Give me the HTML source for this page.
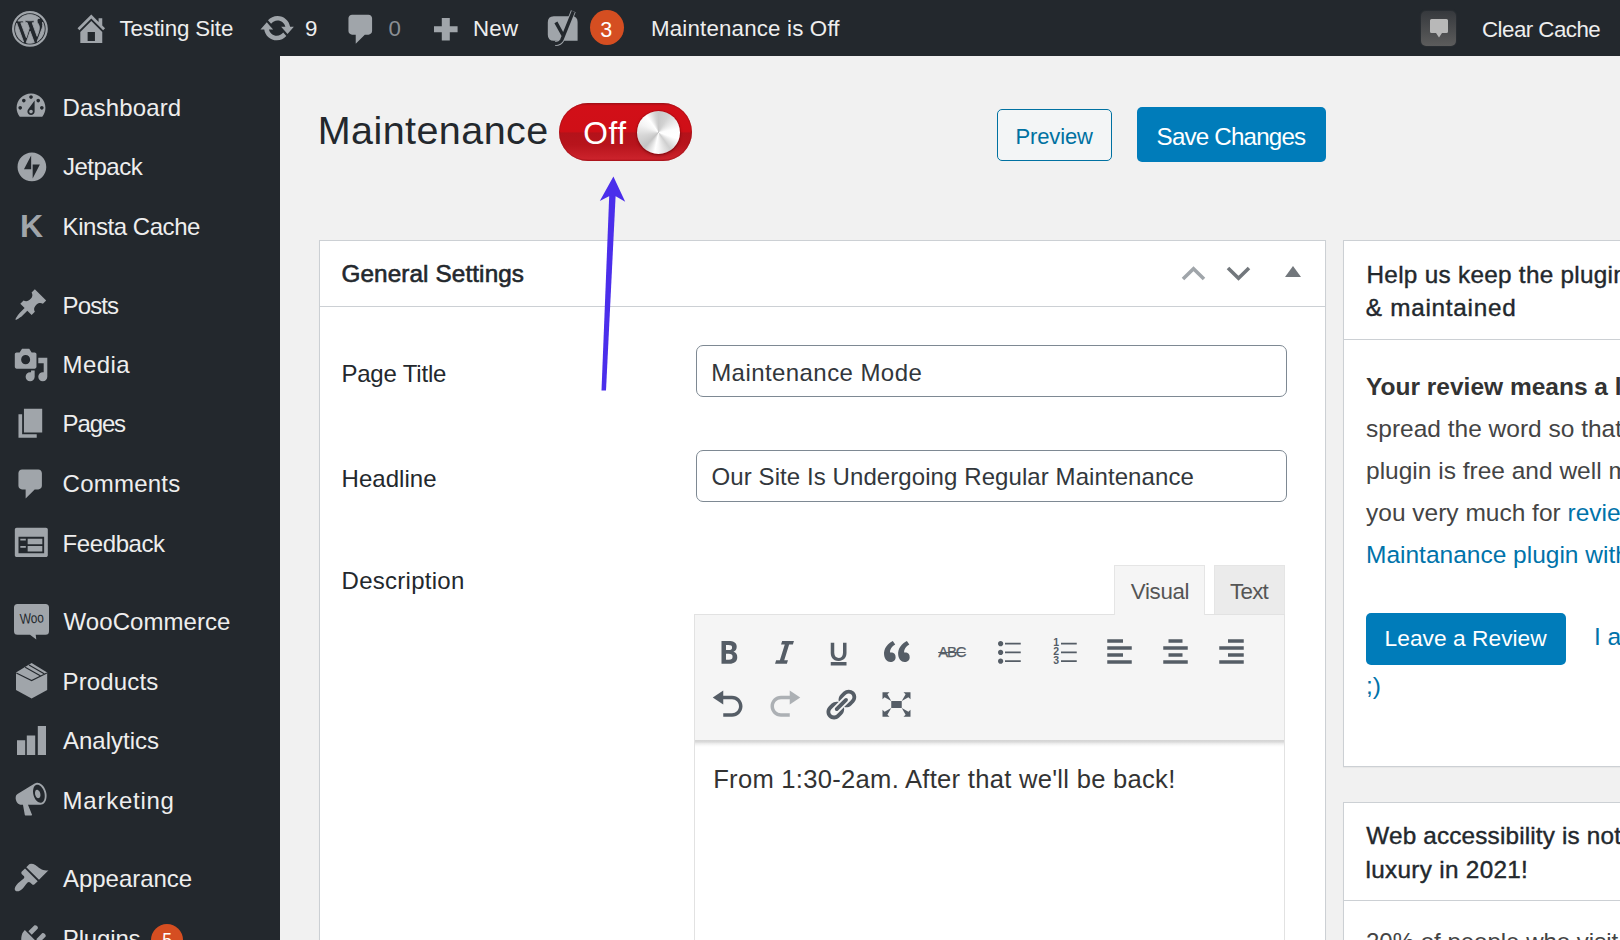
<!DOCTYPE html>
<html lang="en">
<head>
<meta charset="utf-8">
<title>Maintenance ‹ Testing Site — WordPress</title>
<style>
*{box-sizing:border-box;margin:0;padding:0}
html,body{width:1620px;height:940px;overflow:hidden;background:#f1f1f1;font-family:"Liberation Sans",sans-serif;color:#23282d}
.abs,.t{position:absolute;white-space:nowrap}
.t{line-height:1;transform-origin:0 50%}
svg{position:absolute;overflow:visible}
#adminbar{position:absolute;left:0;top:0;width:1620px;height:56px;background:#23282d}
#adminmenu{position:absolute;left:0;top:56px;width:280px;height:884px;background:#23282d}
.ab{font-size:22.3px;color:#eee;top:18px}
.mi{font-size:24px;color:#eee;left:63px}
.ic{fill:#a0a5aa}
.postbox{position:absolute;background:#fff;border:1px solid #ccd0d4;box-shadow:0 1px 1px rgba(0,0,0,.04)}
.hline{position:absolute;height:1px;background:#ccd0d4}
.lbl{font-size:24px;color:#23282d;left:342px}
.inp{position:absolute;left:696px;width:591px;height:52px;border:1px solid #7e8993;border-radius:7px;background:#fff}
.inpt{font-size:24px;color:#32373c;left:712px}
.h2{font-size:24.3px;color:#23282d;-webkit-text-stroke:.6px #23282d}
.h2s{font-size:24.3px;color:#23282d;-webkit-text-stroke:.4px #23282d}
.p{font-size:24.5px;color:#444;left:1366px}
.lnk{color:#0073aa}
.edi{fill:#555d66}
</style>
</head>
<body>
<!-- ADMIN BAR -->
<div id="adminbar">
<!--ABI-->
<svg class="ic" style="left:12.07px;top:10.52px" width="35.85" height="35.85" viewBox="0 0 20 20"><path fill-rule="evenodd" d="M10 0a10 10 0 1 0 0 20a10 10 0 1 0 0-20zM10 1.250a8.750 8.750 0 1 1 0 17.500a8.750 8.750 0 1 1 0-17.500z"/><path transform="translate(10 10) scale(.9) translate(-10 -10)" stroke="#a0a5aa" stroke-width=".55" stroke-linejoin="round" d="M7.780 15.370L4.370 6.220c.550-.020 1.170-.080 1.170-.080.500-.060.440-1.130-.060-1.110 0 0-1.450.110-2.370.110-.180 0-.370 0-.580-.010C4.120 2.690 6.870 1.110 10 1.110c2.330 0 4.450.870 6.050 2.340-.680-.110-1.650.390-1.650 1.580 0 .740.450 1.360.900 2.100.350.610.550 1.360.550 2.460 0 1.490-1.400 5-1.400 5l-3.030-8.370c.540-.020.820-.170.820-.170.500-.050.440-1.250-.060-1.220 0 0-1.440.120-2.380.120-.870 0-2.330-.120-2.330-.120-.500-.030-.560 1.200-.060 1.220l.920.080 1.260 3.410zM17.410 10c.240-.640.740-1.870.430-4.250.700 1.290 1.050 2.710 1.050 4.250 0 3.290-1.730 6.240-4.400 7.780.970-2.590 1.940-5.200 2.920-7.780zM6.100 18.090C3.120 16.650 1.110 13.530 1.110 10c0-1.300.230-2.480.720-3.590C3.250 10.300 4.670 14.200 6.100 18.090zm4.030-6.630l2.580 6.980c-.860.290-1.760.450-2.710.450-.790 0-1.570-.110-2.290-.330.810-2.380 1.620-4.740 2.420-7.100z"/></svg>
<svg class="ic" style="left:72.51px;top:10.20px" width="36.58" height="36.58" viewBox="0 0 20 20"><path d="M16 8.500l1.530 1.530-1.060 1.060L10 4.620l-6.470 6.470-1.060-1.060L10 2.500l4 4v-2h2v4zm-6-2.460l6 5.990V18H4v-5.970zM12 17v-5H8v5h4z"/></svg>
<svg class="ic" style="left:258.84px;top:10.34px" width="36.32" height="36.32" viewBox="0 0 20 20"><path d="M10.200 3.280c3.530 0 6.430 2.610 6.920 6h2.080l-3.500 4-3.500-4h2.320c-.450-1.970-2.210-3.450-4.320-3.450-1.450 0-2.730.710-3.540 1.780L4.950 5.660C6.230 4.200 8.110 3.280 10.200 3.280zm-.400 13.440c-3.520 0-6.430-2.610-6.920-6H.800l3.500-4c1.170 1.330 2.330 2.670 3.500 4H5.480c.450 1.970 2.210 3.450 4.320 3.450 1.450 0 2.730-.710 3.540-1.780l1.710 1.950c-1.280 1.460-3.150 2.380-5.250 2.380z"/></svg>
<svg class="ic" style="left:342.72px;top:10.96px" width="36.37" height="36.37" viewBox="0 0 20 20"><path d="M5 2h9c1.100 0 2 .900 2 2v7c0 1.100-.900 2-2 2h-2l-5 5v-5H5c-1.100 0-2-.900-2-2V4c0-1.100.900-2 2-2z"/></svg>
<svg class="ic" style="left:433.8px;top:17.8px" width="23.600" height="22.400" viewBox="0 0 23.600 22.400"><path d="M7.800 0h8v8.200h7.800v6h-7.800v8.200h-8v-8.200H0v-6h7.800z"/></svg>
<svg style="left:545px;top:8px" width="36" height="40" viewBox="545 8 36 40"><path d="M573.300 11.300L561.900 39.600Q560.200 43.400 555 43.500" fill="none" stroke="#a0a5aa" stroke-width="5.100" stroke-linecap="butt"/><path d="M553.800 16.200h18q5.800 0 5.800 5.800v18.800h-23.800q-6 0-6-6v-12.600q0-6 6-6z" fill="#a0a5aa"/><path d="M573.300 11.300L561.900 39.600Q560.200 43.400 555 43.500M555.900 22.400L563.300 35.800" fill="none" stroke="#23282d" stroke-width="3.400"/></svg>
<!--/ABI-->
<span class="t ab" id="ab1" style="left:119.4px;letter-spacing:-0.12px;top:18.0px">Testing Site</span>
<span class="t ab" id="ab2" style="left:305.0px;letter-spacing:0.00px;top:17.7px">9</span>
<span class="t ab" id="ab3" style="left:388.6px;color:#8a8f94;top:17.7px">0</span>
<span class="t ab" id="ab4" style="left:473.0px;letter-spacing:0.20px;top:17.7px">New</span>
<span class="abs" style="left:590px;top:10px;width:34px;height:35px;border-radius:50%;background:#d54e21"></span>
<span class="t" id="ab5" style="left:600.300px;top:18.600px;font-size:21.600px;color:#fff">3</span>
<span class="t ab" id="ab6" style="left:651.0px;letter-spacing:0.18px;top:17.7px">Maintenance is Off</span>
<span class="abs" style="left:1421px;top:11px;width:35px;height:35px;border-radius:5px;background:linear-gradient(#36393d,#5c5c5c);box-shadow:0 0 2px #3a3d40"></span>
<svg style="left:1421px;top:11px" width="35" height="35" viewBox="0 0 35 35"><path d="M10.500 8 h15 a1.500 1.500 0 0 1 1.500 1.500 v11 a1.500 1.500 0 0 1 -1.500 1.500 h-4.500 l-3 4.500 -3 -4.500 h-4.500 a1.500 1.500 0 0 1 -1.500 -1.500 v-11 a1.500 1.500 0 0 1 1.500 -1.500z" fill="#b8b8b8"/></svg>
<span class="t ab" id="ab7" style="left:1482.0px;letter-spacing:-0.52px;top:18.6px">Clear Cache</span>
</div>

<!-- ADMIN MENU -->
<div id="adminmenu">
<!--MNI-->
<svg class="ic" style="left:13.48px;top:32.23px" width="36.05" height="36.05" viewBox="0 0 20 20"><path d="M3.760 16h12.480c1.100-1.370 1.760-3.110 1.760-5 0-4.420-3.580-8-8-8s-8 3.580-8 8c0 1.890.660 3.630 1.760 5zM10 4c.550 0 1 .450 1 1s-.450 1-1 1-1-.450-1-1 .450-1 1-1zM6 6c.550 0 1 .450 1 1s-.450 1-1 1-1-.450-1-1 .450-1 1-1zm8 0c.550 0 1 .450 1 1s-.450 1-1 1-1-.450-1-1 .450-1 1-1zm-5.370 5.550L12 7v6c0 1.100-.900 2-2 2s-2-.900-2-2c0-.570.240-1.080.630-1.450zM4 10c.550 0 1 .450 1 1s-.450 1-1 1-1-.450-1-1 .450-1 1-1zm12 0c.550 0 1 .450 1 1s-.450 1-1 1-1-.450-1-1 .450-1 1-1zm-5 3c0-.550-.450-1-1-1s-1 .450-1 1 .450 1 1 1 1-.450 1-1z"/></svg>
<svg class="ic" style="left:14.59px;top:94.04px" width="33.82" height="33.82" viewBox="0 0 20 20"><path d="M10 1.500c-4.690 0-8.500 3.810-8.500 8.500s3.810 8.500 8.500 8.500 8.500-3.810 8.500-8.500-3.810-8.500-8.500-8.500zm-.450 9.900H5.300L9.550 3.200v8.200zm.900 5.400V8.600h4.250l-4.250 8.200z"/></svg>
<svg class="ic" style="left:13.48px;top:230.71px" width="35.63" height="35.63" viewBox="0 0 20 20"><path d="M10.440 3.020l1.820-1.820 6.360 6.350-1.830 1.820c-1.050-.680-2.480-.570-3.410.360l-.750.750c-.920.930-1.040 2.350-.350 3.410l-1.830 1.820-2.410-2.410-2.800 2.790c-.420.420-3.380 2.710-3.800 2.290s1.860-3.390 2.280-3.810l2.790-2.790L4.100 9.360l1.830-1.820c1.050.690 2.480.570 3.400-.360l.750-.750c.930-.920 1.050-2.350.360-3.410z"/></svg>
<svg class="ic" style="left:13.44px;top:290.64px" width="36.11" height="36.11" viewBox="0 0 20 20"><path d="M13 11V4c0-.550-.450-1-1-1h-1.670L9 1H5L3.670 3H2c-.550 0-1 .450-1 1v7c0 .550.450 1 1 1h10c.550 0 1-.450 1-1zM7 4.500c1.380 0 2.500 1.120 2.500 2.500S8.380 9.500 7 9.500 4.500 8.380 4.500 7 5.620 4.500 7 4.500zM14 6h5v10.500c0 1.380-1.120 2.500-2.500 2.500S14 17.880 14 16.500s1.120-2.500 2.500-2.500c.170 0 .340.020.500.050V9h-3V6zm-4 8.050V13h2v3.500c0 1.380-1.120 2.500-2.500 2.500S7 17.880 7 16.500 8.120 14 9.500 14c.170 0 .340.020.500.050z"/></svg>
<svg class="ic" style="left:13.31px;top:349.25px" width="36.51" height="36.51" viewBox="0 0 20 20"><path d="M6 15V2h10v13H6zm-1 1h8v2H3V5h2v11z"/></svg>
<svg class="ic" style="left:13.49px;top:409.53px" width="36.13" height="36.13" viewBox="0 0 20 20"><path d="M5 2h9c1.100 0 2 .900 2 2v7c0 1.100-.900 2-2 2h-2l-5 5v-5H5c-1.100 0-2-.900-2-2V4c0-1.100.900-2 2-2z"/></svg>
<svg class="ic" style="left:13.18px;top:468.03px" width="36.65" height="36.65" viewBox="0 0 20 20"><path d="M2 2h16c.550 0 1 .450 1 1v14c0 .550-.450 1-1 1H2c-.550 0-1-.450-1-1V3c0-.550.450-1 1-1zm15 14V7H3v9h14zM4 8v1h3V8H4zm4 0v3h8V8H8zm-4 4v1h3v-1H4zm4 0v3h8v-3H8z"/></svg>
<svg class="ic" style="left:13.26px;top:725.04px" width="36.41" height="36.41" viewBox="0 0 20 20"><path d="M18.150 5.940c.460 1.620.380 3.220-.020 4.480-.420 1.280-1.260 2.180-2.300 2.480-.160.060-.260.060-.400.060-.060.020-.120.020-.180.020-.060.020-.140.020-.220.020h-6.800l2.220 5.500c.020.140-.060.260-.140.340-.080.100-.240.160-.340.160H6.950c-.100 0-.260-.060-.340-.160-.080-.080-.160-.200-.140-.340l-1-5.500H4.250l-.020-.020c-.500.060-1.080-.180-1.540-.620s-.880-1.080-1.060-1.880c-.240-.800-.200-1.560-.020-2.200.180-.620.580-1.080 1.060-1.300l.020-.020 9-5.400c.100-.060.180-.100.240-.160.060-.040.140-.080.240-.120.160-.080.280-.120.500-.180 1.040-.300 2.240.100 3.220.980s1.840 2.240 2.260 3.860zm-2.580 5.980h-.020c.400-.100.740-.340 1.040-.700.580-.700.860-1.760.860-3.040 0-.640-.100-1.300-.280-1.980-.340-1.360-1.020-2.500-1.780-3.240s-1.680-1.100-2.460-.880c-.820.220-1.400.960-1.700 2-.320 1.040-.280 2.360.060 3.720.380 1.360 1 2.500 1.800 3.240.780.740 1.620 1.100 2.480.880zm-2.540-7.080c.220-.040.420-.020.620.040.380.160.760.480 1.020 1s.420 1.200.420 1.780c0 .300-.040.560-.120.800-.180.480-.440.840-.860.940-.340.100-.800-.060-1.140-.400s-.640-.860-.780-1.500c-.180-.620-.120-1.240.020-1.720s.480-.840.820-.940z"/></svg>
<svg class="ic" style="left:13.29px;top:804.35px" width="35.92" height="35.92" viewBox="0 0 20 20"><path d="M14.480 11.060L7.410 3.990l1.500-1.500c.500-.560 2.300-.470 3.510.320 1.210.800 1.430 1.280 2.910 2.100 1.180.640 2.450 1.260 4.450.850zm-.710.710L6.700 4.700 4.930 6.470c-.390.390-.390 1.020 0 1.410l1.060 1.060c.390.390.390 1.030 0 1.420-.600.600-1.430 1.110-2.210 1.690-.350.260-.700.530-1.010.840C1.430 14.230.400 16.080 1.400 17.070c.990 1 2.840-.030 4.180-1.360.310-.310.580-.660.850-1.020.570-.780 1.080-1.610 1.690-2.210.390-.390 1.020-.390 1.410 0l1.060 1.060c.390.390 1.020.390 1.410 0z"/></svg>
<svg class="ic" id="plg" style="left:13.8px;top:865.3px" width="36.00" height="36.00" viewBox="0 0 20 20"><path d="M13.110 4.360L9.870 7.600 8 5.730l3.240-3.240c.350-.340 1.050-.200 1.560.320.520.510.660 1.210.310 1.550zm-8 1.770l.910-1.120 9.010 9.010-1.190.840c-.710.710-2.630 1.160-3.820 1.160H6.140L4.900 17.260c-.590.590-1.540.590-2.120 0-.590-.580-.590-1.530 0-2.120l1.240-1.240v-3.880c0-1.130.400-3.190 1.090-3.890zm7.260 3.970l3.240-3.240c.340-.350 1.040-.210 1.550.310.520.510.660 1.210.310 1.550l-3.240 3.250z"/></svg>
<svg class="ic" style="left:17px;top:670px" width="29" height="29" viewBox="0 0 29 29"><path d="M0 14.300h8.200V29H0zM9.800 9.500h8.400V29H9.800zM20.800 0H29v29h-8.200z"/></svg>
<span class="t" id="kk" style="left:20px;top:154px;font-size:32px;font-weight:700;color:#a0a5aa">K</span>
<svg class="ic" style="left:14px;top:548px" width="35" height="36" viewBox="0 0 35 36"><path d="M3.500 0h28a3.500 3.500 0 0 1 3.500 3.500v23.700a3.500 3.500 0 0 1-3.500 3.500h-9.800l.6 4.800-6.300-4.800H3.500a3.500 3.500 0 0 1-3.500-3.500V3.500a3.500 3.500 0 0 1 3.500-3.500z"/></svg>
<span class="t" id="woo" style="left:20px;top:555.5px;font-size:14.5px;color:#23282d;letter-spacing:-.3px;transform:rotate(-4deg) scaleX(.82)">Woo</span>
<svg class="ic" style="left:15.800px;top:606.900px" width="31.200" height="35.500" viewBox="0 0 31.200 35.500"><path d="M15.600 0L31.200 9.500V27L15.600 35.500 0 27V9.500z"/><path d="M0.300 10L15.600 17.600 30.900 10M9.200 4.200L24.300 12.800M13 1.900L28.200 10.800" fill="none" stroke="#23282d" stroke-width="1.100"/></svg>
<!--/MNI-->
<span class="t mi" id="m1" style="top:39.7px;letter-spacing:0.14px;left:62.6px">Dashboard</span>
<span class="t mi" id="m2" style="top:99.2px;letter-spacing:-0.50px;left:63.0px">Jetpack</span>
<span class="t mi" id="m3" style="top:158.7px;letter-spacing:-0.45px;left:62.6px">Kinsta Cache</span>
<span class="t mi" id="m4" style="top:237.9px;letter-spacing:-0.91px;left:62.6px">Posts</span>
<span class="t mi" id="m5" style="top:296.7px;letter-spacing:0.39px;left:62.6px">Media</span>
<span class="t mi" id="m6" style="top:356.1px;letter-spacing:-1.14px;left:62.6px">Pages</span>
<span class="t mi" id="m7" style="top:415.7px;letter-spacing:0.22px;left:62.6px">Comments</span>
<span class="t mi" id="m8" style="top:475.7px;letter-spacing:-0.41px;left:62.6px">Feedback</span>
<span class="t mi" id="m9" style="top:554.1px;letter-spacing:0.06px;left:63.6px">WooCommerce</span>
<span class="t mi" id="m10" style="top:614.1px;letter-spacing:0.14px;left:62.6px">Products</span>
<span class="t mi" id="m11" style="top:673.0px;letter-spacing:0.00px;left:63.0px">Analytics</span>
<span class="t mi" id="m12" style="top:732.9px;letter-spacing:0.75px;left:62.6px">Marketing</span>
<span class="t mi" id="m13" style="top:811.3px;letter-spacing:-0.04px;left:63.0px">Appearance</span>
<span class="t mi" id="m14" style="top:870.7px;letter-spacing:-0.15px;left:62.8px">Plugins</span>
<span class="abs" style="left:151px;top:867.700px;width:32px;height:32px;border-radius:50%;background:#d54e21"></span>
<span class="t" id="m15" style="left:162.300px;top:876px;font-size:17.500px;color:#fff">5</span>
</div>

<!-- PAGE HEADER -->
<span class="t" id="h1" style="left:317.8px;top:110.9px;font-size:39.5px;color:#23282d;letter-spacing:0.42px">Maintenance</span>
<div class="abs" style="left:559px;top:103px;width:132.500px;height:58px;border-radius:29px;background:linear-gradient(#a50c13 0,#d20f18 5%,#cf0f17 49%,#b4121a 52%,#b7141c 72%,#cb222b 96%,#b5141c 100%);box-shadow:inset 0 0 0 1px rgba(160,20,25,.5)"></div>
<span class="t" id="off" style="left:583.2px;top:118.1px;font-size:31.7px;color:#fff;letter-spacing:0.55px">Off</span>
<div class="abs" style="left:636.500px;top:110.500px;width:43px;height:43px;border-radius:50%;background:conic-gradient(from 0deg,#c9c9c9 0,#d2d2d2 8%,#fdfdfd 22%,#fff 30%,#cfcfcf 40%,#f6f6f6 50%,#fff 53%,#c4c4c4 62%,#d6d6d6 72%,#f4f4f4 82%,#fff 90%,#d4d4d4 97%,#c9c9c9 100%);box-shadow:0 1.500px 3px rgba(90,0,5,.55),0 0 0 1px rgba(150,10,18,.35)"></div>

<div class="abs" style="left:997px;top:109px;width:115px;height:52px;border:1px solid #0071a1;border-radius:5px;background:#f3f5f6"></div>
<span class="t" id="b1" style="left:1015.6px;top:125.8px;font-size:22px;color:#0071a1;letter-spacing:-0.16px">Preview</span>
<div class="abs" style="left:1137px;top:107px;width:189px;height:55px;border-radius:5px;background:#007cba"></div>
<span class="t" id="b2" style="left:1156.6px;top:124.8px;font-size:24.2px;color:#fff;letter-spacing:-0.83px">Save Changes</span>

<!-- MAIN POSTBOX -->
<div class="postbox" style="left:319px;top:240px;width:1007px;height:720px"></div>
<div class="hline" style="left:320px;top:306px;width:1005px"></div>
<span class="t h2" id="g1" style="left:341.4px;top:262.0px;letter-spacing:0.11px">General Settings</span>
<svg style="left:1181px;top:266px" width="25" height="15" viewBox="0 0 25 15"><path d="M2 13 L12.500 2.800 L23 13" fill="none" stroke="#a0a5aa" stroke-width="3.600"/></svg>
<svg style="left:1226px;top:266px" width="25" height="15" viewBox="0 0 25 15"><path d="M2 2 L12.500 12.200 L23 2" fill="none" stroke="#72777c" stroke-width="3.600"/></svg>
<svg style="left:1285px;top:266px" width="16" height="11" viewBox="0 0 16 11"><path d="M0 11 L8 0 L16 11z" fill="#72777c"/></svg>

<span class="t lbl" id="l1" style="top:361.7px;letter-spacing:-0.19px;left:341.4px">Page Title</span>
<div class="inp" style="top:345px"></div>
<span class="t inpt" id="i1" style="top:361.0px;letter-spacing:0.43px;left:711.2px">Maintenance Mode</span>
<span class="t lbl" id="l2" style="top:466.9px;letter-spacing:0.03px;left:341.6px">Headline</span>
<div class="inp" style="top:450px"></div>
<span class="t inpt" id="i2" style="top:465.3px;letter-spacing:0.08px;left:711.6px">Our Site Is Undergoing Regular Maintenance</span>
<span class="t lbl" id="l3" style="top:568.7px;letter-spacing:0.26px;left:341.6px">Description</span>

<!-- EDITOR -->
<div class="abs" style="left:1214px;top:565px;width:71px;height:50px;background:#ebebeb;border:1px solid #e5e5e5"></div>
<div class="abs" style="left:694px;top:614px;width:591px;height:340px;background:#fff;border:1px solid #e2e2e2"></div>
<div class="abs" style="left:695px;top:615px;width:589px;height:125px;background:#f5f5f5"></div>
<div class="abs" style="left:695px;top:740px;width:589px;height:7px;background:linear-gradient(#d4d4d4 0,#dadada 28%,#ececec 50%,#f8f8f8 75%,#fff 100%)"></div>
<div class="abs" style="left:1114px;top:565px;width:91px;height:50px;background:#f5f5f5;border:1px solid #e5e5e5;border-bottom:0"></div>
<span class="t" id="t1" style="left:1130.8px;top:581.1px;font-size:22.3px;color:#555;letter-spacing:-0.32px">Visual</span>
<span class="t" id="t2" style="left:1230.0px;top:581.1px;font-size:22.3px;color:#555;letter-spacing:-0.70px">Text</span>
<svg class="edi" style="left:710.7px;top:633.5px" width="35" height="35" viewBox="0 0 20 20"><path d="M6 4v13h4.54c1.37 0 2.46-.33 3.26-1 .8-.66 1.2-1.58 1.2-2.77 0-.84-.17-1.51-.51-2.01s-.9-.85-1.67-1.03v-.09c.57-.1 1.02-.4 1.36-.9s.51-1.13.51-1.91c0-1.14-.39-1.98-1.17-2.5C12.75 4.26 11.5 4 9.78 4H6zm2.57 5.15V6.26h1.36c.73 0 1.27.11 1.61.32.34.22.51.58.51 1.07 0 .54-.16.92-.47 1.15s-.82.35-1.51.35h-1.5zm0 2.19h1.6c1.44 0 2.16.53 2.16 1.61 0 .6-.17 1.05-.51 1.34s-.86.43-1.57.43H8.57v-3.38z"/></svg>
<svg class="edi" style="left:766.7px;top:633.5px" width="35" height="35" viewBox="0 0 20 20"><path d="M14.78 6h-2.13l-2.8 9h2.12l-.62 2H4.6l.62-2h2.14l2.8-9H8.03l.62-2h6.75z"/></svg>
<svg class="edi" style="left:821.7px;top:633.5px" width="35" height="35" viewBox="0 0 20 20"><path d="M14 5h-2v5.71c0 1.99-1.12 2.98-2.45 2.98-1.32 0-2.55-1-2.55-2.96V5H5v5.87c0 1.91 1 4.54 4.48 4.54 3.49 0 4.52-2.58 4.52-4.5V5zm0 13v-2H5v2h9z"/></svg>
<svg class="edi" style="left:878.7px;top:633.5px" width="35" height="35" viewBox="0 0 20 20"><path d="M9.49 13.22c0-.74-.2-1.38-.61-1.9-.62-.78-1.83-.88-2.53-.72-.29-1.65 1.11-3.75 2.92-4.65L7.88 4c-2.73 1.3-5.42 4.28-4.96 8.05C3.21 14.43 4.59 16 6.54 16c.85 0 1.56-.25 2.12-.75s.83-1.18.83-2.03zm8.05 0c0-.74-.2-1.38-.61-1.9-.63-.78-1.83-.88-2.53-.72-.29-1.65 1.11-3.75 2.92-4.65L15.93 4c-2.73 1.3-5.41 4.28-4.95 8.05.29 2.38 1.66 3.95 3.61 3.95.85 0 1.56-.25 2.12-.75s.83-1.18.83-2.03z"/></svg>
<svg class="edi" style="left:990.7px;top:633.5px" width="35" height="35" viewBox="0 0 20 20"><path d="M5.5 7C4.67 7 4 6.33 4 5.5 4 4.68 4.67 4 5.5 4 6.32 4 7 4.68 7 5.5 7 6.33 6.32 7 5.5 7zM8 5h9v1H8V5zm-2.500 7c-.83 0-1.5-.67-1.5-1.5C4 9.68 4.67 9 5.5 9c.82 0 1.5.68 1.5 1.5 0 .83-.68 1.5-1.500 1.5zM8 10h9v1H8v-1zm-2.500 7c-.83 0-1.5-.67-1.5-1.5 0-.82.67-1.5 1.5-1.500.82 0 1.5.68 1.5 1.500 0 .83-.68 1.5-1.500 1.5zM8 15h9v1H8v-1z"/></svg>
<svg class="edi" style="left:1046.7px;top:633.5px" width="35" height="35" viewBox="0 0 20 20"><path d="M8 5h9v1H8V5zm0 5h9v1H8v-1zm0 5h9v1H8v-1z"/></svg>
<svg class="edi" style="left:1101.7px;top:633.5px" width="35" height="35" viewBox="0 0 20 20"><path d="M12 5V3H3v2h9zm5 4V7H3v2h14zm-5 4v-2H3v2h9zm5 4v-2H3v2h14z"/></svg>
<svg class="edi" style="left:1157.7px;top:633.5px" width="35" height="35" viewBox="0 0 20 20"><path d="M14 5V3H6v2h8zm3 4V7H3v2h14zm-3 4v-2H6v2h8zm3 4v-2H3v2h14z"/></svg>
<svg class="edi" style="left:1213.7px;top:633.5px" width="35" height="35" viewBox="0 0 20 20"><path d="M17 5V3H8v2h9zm0 4V7H3v2h14zm0 4v-2H8v2h9zm0 4v-2H3v2h14z"/></svg>
<span class="t" id="abc" style="left:938.200px;top:643.900px;font-size:15px;color:#555d66;text-decoration:line-through;letter-spacing:-1.200px;-webkit-text-stroke:.25px #555d66">ABC</span>
<span class="t" style="left:1053.2px;top:637.0px;font-size:10.5px;font-weight:700;color:#555d66">1</span>
<span class="t" style="left:1053.2px;top:646.2px;font-size:10.5px;font-weight:700;color:#555d66">2</span>
<span class="t" style="left:1053.2px;top:655.4px;font-size:10.5px;font-weight:700;color:#555d66">3</span>
<svg class="edi" style="left:710.7px;top:686.5px" width="35" height="35" viewBox="0 0 20 20"><path d="M12 5H7V2L1 6l6 4V7h5c2.2 0 4 1.8 4 4s-1.8 4-4 4H7v2h5c3.3 0 6-2.7 6-6s-2.7-6-6-6z"/></svg>
<svg class="edi" style="left:766.7px;top:686.5px" width="35" height="35" viewBox="0 0 20 20" ><path opacity=".45" d="M8 5h5V2l6 4-6 4V7H8c-2.2 0-4 1.8-4 4s1.800 4 4 4h5v2H8c-3.3 0-6-2.7-6-6s2.700-6 6-6z"/></svg>
<svg class="edi" style="left:822.7px;top:686.5px" width="35" height="35" viewBox="0 0 20 20"><path d="M17.74 2.76c1.68 1.69 1.68 4.41 0 6.1l-1.53 1.52c-1.12 1.12-2.7 1.47-4.14 1.09l2.62-2.61.76-.77.76-.76c.84-.84.84-2.2 0-3.04-.84-.85-2.2-.85-3.04 0l-.77.76-3.38 3.38c-.37-1.44-.02-3.02 1.1-4.14l1.52-1.53c1.69-1.68 4.42-1.68 6.1 0zM8.59 13.43l5.34-5.34c.42-.42.42-1.1 0-1.52-.44-.43-1.13-.39-1.53 0l-5.33 5.34c-.42.42-.42 1.1 0 1.52.44.43 1.13.39 1.52 0zm-.76 2.29l4.14-4.15c.38 1.44.03 3.02-1.09 4.14l-1.52 1.53c-1.69 1.68-4.41 1.68-6.1 0-1.68-1.68-1.68-4.42 0-6.1l1.53-1.52c1.12-1.12 2.7-1.47 4.14-1.1l-4.14 4.15c-.85.84-.85 2.2 0 3.05.84.84 2.2.84 3.04 0z"/></svg>
<svg class="edi" style="left:878.7px;top:686.5px" width="35" height="35" viewBox="0 0 20 20"><path d="M7 8h6v4H7zM2 13v4h4l-1.200-1.200L7 12l-3.800 2.200zM14 17h4v-4l-1.200 1.200L13 12l2.200 3.800zM14 3l1.200 1.200L13 8l3.800-2.200L18 7V3zM6 3H2v4l1.200-1.200L7 8 4.800 4.200z"/></svg>
<span class="t" id="ec" style="left:713.2px;top:766.7px;font-size:25.6px;color:#333;letter-spacing:0.27px">From 1:30-2am. After that we'll be back!</span>


<!-- SIDE POSTBOXES -->
<div class="postbox" style="left:1343px;top:240px;width:300px;height:527px"></div>
<div class="hline" style="left:1344px;top:339px;width:280px"></div>
<span class="t h2s" id="s1" style="left:1366.5px;top:262.800px;letter-spacing:0.29px">Help us keep the plugin free</span>
<span class="t h2s" id="s2" style="left:1365.8px;top:295.7px;letter-spacing:0.73px">&amp; maintained</span>
<span class="t p" id="s3" style="top:374.6px;font-weight:700;color:#333">Your review means a lot! Please help us</span>
<span class="t p" id="s4" style="top:416.6px">spread the word so that others know this</span>
<span class="t p" id="s5" style="top:458.6px">plugin is free and well maintained! Thank</span>
<span class="t p" id="s6" style="top:500.6px">you very much for <span class="lnk">reviewing the</span></span>
<span class="t p lnk" id="s7" style="top:542.6px">Maintanance plugin with 5 stars</span>
<div class="abs" style="left:1366px;top:613px;width:200px;height:52px;border-radius:5px;background:#007cba"></div>
<span class="t" id="s8" style="left:1384.6px;top:626.5px;font-size:22.75px;color:#fff;letter-spacing:0.02px">Leave a Review</span>
<span class="t p lnk" id="s9" style="left:1594px;top:625px">I already did</span>
<span class="t p lnk" id="s10" style="top:674px">;)</span>
<div class="postbox" style="left:1343px;top:802px;width:300px;height:200px"></div>
<div class="hline" style="left:1344px;top:900px;width:280px"></div>
<span class="t h2s" id="s11" style="left:1366.3px;top:824px;letter-spacing:0.17px">Web accessibility is not a</span>
<span class="t h2s" id="s12" style="left:1365.6px;top:858.3px;letter-spacing:0.30px">luxury in 2021!</span>
<span class="t" id="s13" style="left:1366px;top:930.300px;font-size:24px;color:#444">20% of people who visit your</span>

<!-- ANNOTATION ARROW -->
<svg style="left:590px;top:170px" width="50" height="230" viewBox="590 170 50 230"><path d="M601.500 390.500L606 390.500L615.600 196L609.200 196z" fill="#4b2eeb"/><path d="M613.400 176.500L625.200 201.800L615.700 196.300L609 196.200L599.800 200.900z" fill="#4b2eeb"/></svg>
</body>
</html>
